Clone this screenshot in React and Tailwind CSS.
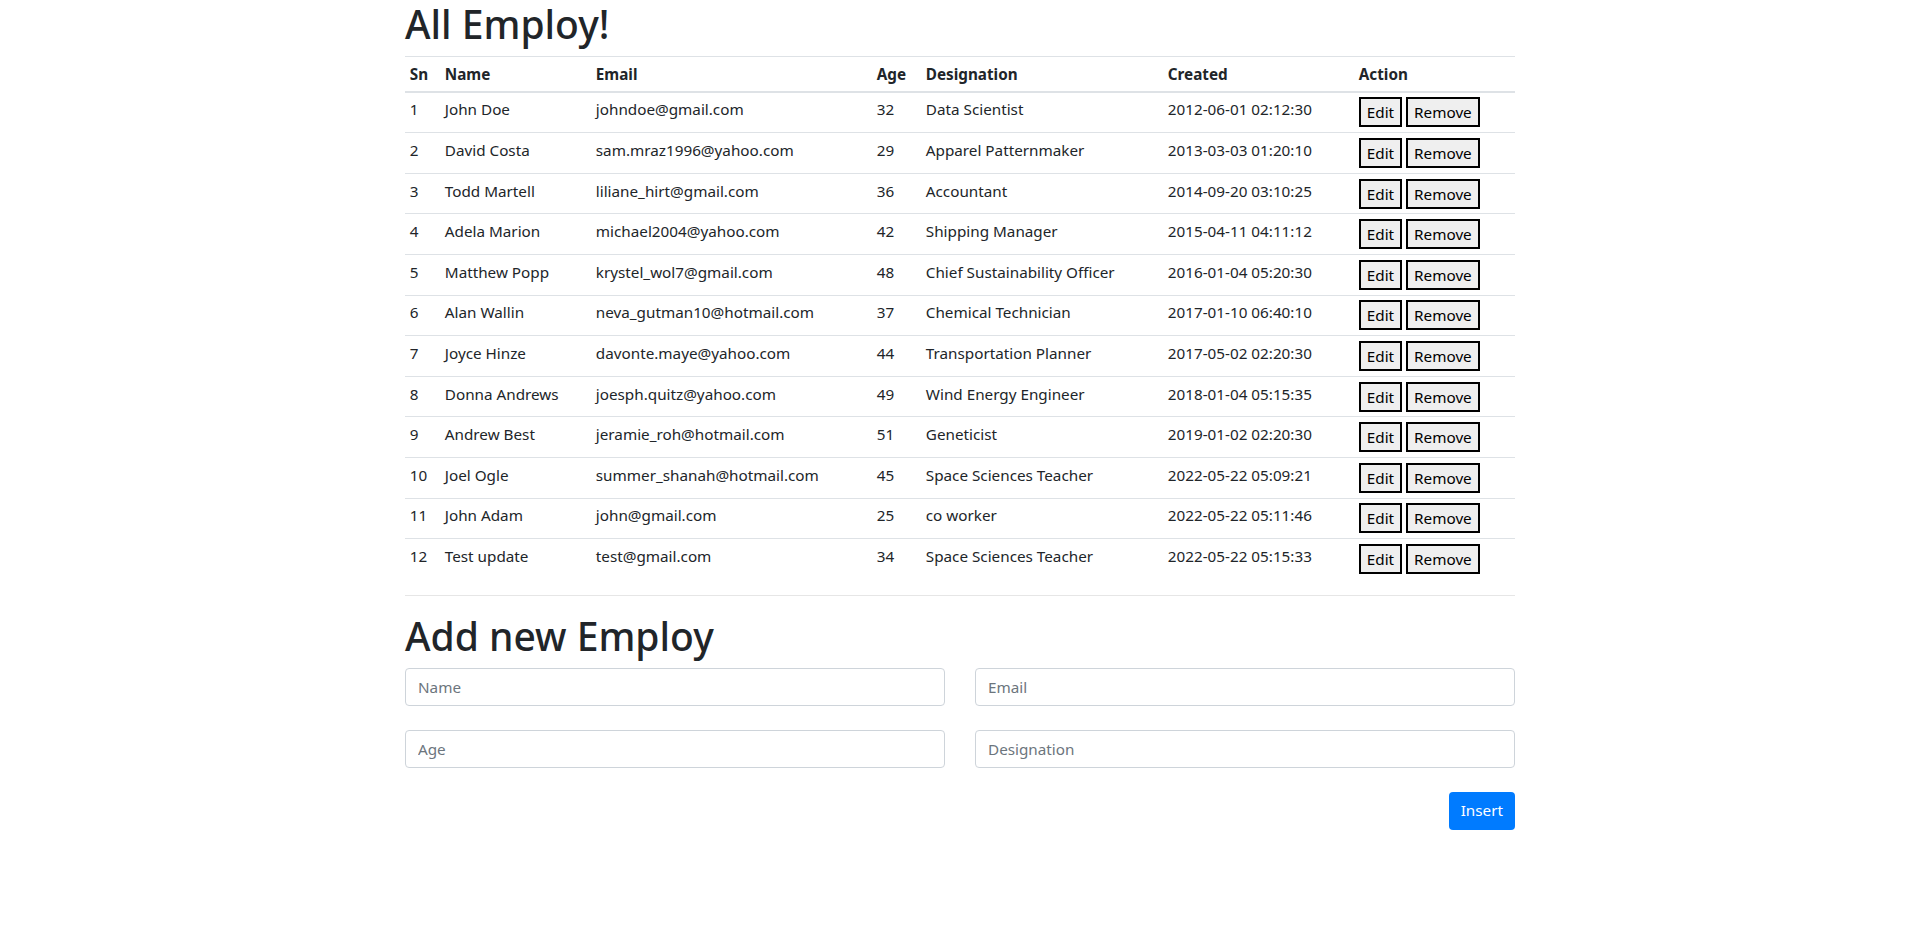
import { useState } from "react";

const employees = [
    [1, "John Doe", "johndoe@gmail.com", 32, "Data Scientist", "2012-06-01 02:12:30"],
    [2, "David Costa", "sam.mraz1996@yahoo.com", 29, "Apparel Patternmaker", "2013-03-03 01:20:10"],
    [3, "Todd Martell", "liliane_hirt@gmail.com", 36, "Accountant", "2014-09-20 03:10:25"],
    [4, "Adela Marion", "michael2004@yahoo.com", 42, "Shipping Manager", "2015-04-11 04:11:12"],
    [5, "Matthew Popp", "krystel_wol7@gmail.com", 48, "Chief Sustainability Officer", "2016-01-04 05:20:30"],
    [6, "Alan Wallin", "neva_gutman10@hotmail.com", 37, "Chemical Technician", "2017-01-10 06:40:10"],
    [7, "Joyce Hinze", "davonte.maye@yahoo.com", 44, "Transportation Planner", "2017-05-02 02:20:30"],
    [8, "Donna Andrews", "joesph.quitz@yahoo.com", 49, "Wind Energy Engineer", "2018-01-04 05:15:35"],
    [9, "Andrew Best", "jeramie_roh@hotmail.com", 51, "Geneticist", "2019-01-02 02:20:30"],
    [10, "Joel Ogle", "summer_shanah@hotmail.com", 45, "Space Sciences Teacher", "2022-05-22 05:09:21"],
    [11, "John Adam", "john@gmail.com", 25, "co worker", "2022-05-22 05:11:46"],
    [12, "Test update", "test@gmail.com", 34, "Space Sciences Teacher", "2022-05-22 05:15:33"],
];

const headers = [
    ["Sn", "w-[35px]"],
    ["Name", "w-[151px]"],
    ["Email", "w-[281px]"],
    ["Age", "w-[49px]"],
    ["Designation", "w-[242px]"],
    ["Created", "w-[191px]"],
    ["Action", "w-[161px]"],
];

function App() {
    const [form, setForm] = useState({ name: "", email: "", age: "", designation: "" });

    const update = (key) => (e) => setForm({ ...form, [key]: e.target.value });

    const inputCls =
        "block w-full h-[38px] px-3 border border-[#ced4da] rounded-[4px] bg-white text-[15.25px] text-[#495057] placeholder:text-[#6c757d] outline-none";

    return (
        <div className="min-h-screen bg-white text-[#212529] font-['Noto_Sans',sans-serif] text-[15.25px]">
            <div className="mx-auto w-[1140px] px-[15px]">
                {/* Liste */}
                <h1 className="text-[39px] leading-[48px] font-medium mb-2">All Employ!</h1>

                <table className="w-full table-fixed border-collapse mb-4">
                    <thead>
                        <tr>
                            {headers.map(([label, w]) => (
                                <th
                                    key={label}
                                    className={`${w} text-left font-bold align-top leading-6 px-[4.8px] py-[4.8px] border-t border-b-2 border-[#dee2e6]`}
                                >
                                    {label}
                                </th>
                            ))}
                        </tr>
                    </thead>
                    <tbody>
                        {employees.map((row) => (
                            <tr key={row[0]}>
                                {row.map((cell, i) => (
                                    <td
                                        key={i}
                                        className="align-top leading-6 px-[4.8px] py-[4.8px] border-t border-[#dee2e6] whitespace-nowrap"
                                    >
                                        {cell}
                                    </td>
                                ))}
                                <td className="align-top px-[4.8px] py-[4.8px] border-t border-[#dee2e6]">
                                    <div className="flex gap-[4px]">
                                        <button className="h-[30px] px-[6px] border-2 border-black bg-[#efefef] text-[15.25px] leading-6 text-black">
                                            Edit
                                        </button>
                                        <button className="h-[30px] px-[6px] border-2 border-black bg-[#efefef] text-[15.25px] leading-6 text-black">
                                            Remove
                                        </button>
                                    </div>
                                </td>
                            </tr>
                        ))}
                    </tbody>
                </table>

                <hr className="border-0 border-t border-[#e6e6e6] mb-4" />

                {/* Formulaire */}
                <h1 className="text-[39px] leading-[48px] font-medium mb-2">Add new Employ</h1>

                <div className="grid grid-cols-2 gap-x-[30px] gap-y-6">
                    <input className={inputCls} placeholder="Name" value={form.name} onChange={update("name")} />
                    <input className={inputCls} placeholder="Email" value={form.email} onChange={update("email")} />
                    <input className={inputCls} placeholder="Age" value={form.age} onChange={update("age")} />
                    <input
                        className={inputCls}
                        placeholder="Designation"
                        value={form.designation}
                        onChange={update("designation")}
                    />
                </div>

                <div className="flex justify-end mt-6">
                    <button className="h-[38px] px-3 rounded-[4px] bg-[#007bff] text-white text-[15.25px]">
                        Insert
                    </button>
                </div>
            </div>
        </div>
    );
}

export default App;
